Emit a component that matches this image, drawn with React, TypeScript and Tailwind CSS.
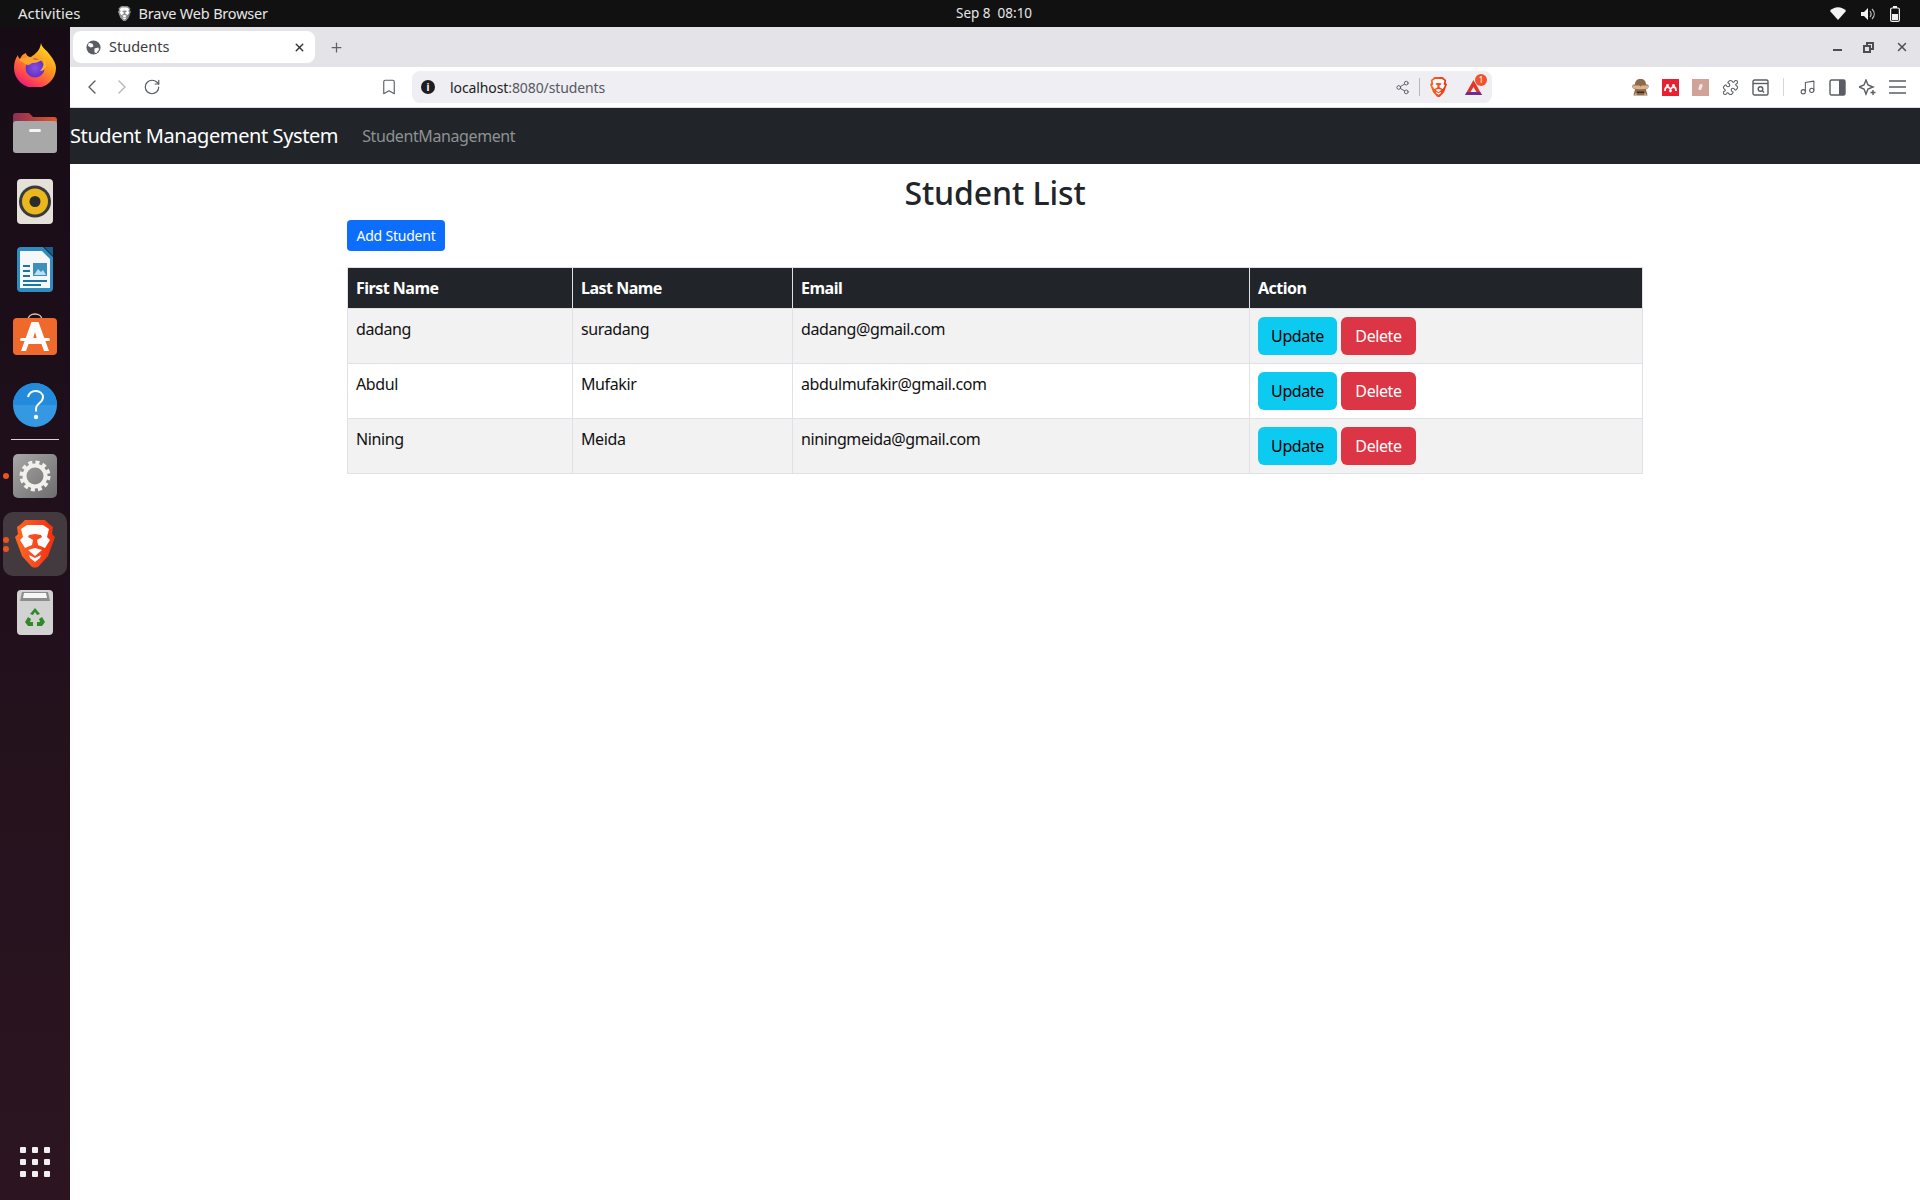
import { Bookmark, ChevronLeft, ChevronRight, Music, Plus, Puzzle, RotateCw, Share2, X } from "lucide-react";
import type { ReactNode } from "react";

const students = [
  { first: "dadang", last: "suradang", email: "dadang@gmail.com" },
  { first: "Abdul", last: "Mufakir", email: "abdulmufakir@gmail.com" },
  { first: "Nining", last: "Meida", email: "niningmeida@gmail.com" },
];

function BraveLion({ size, mono }: { size: number; mono?: boolean }) {
  const id = mono ? "bm" : "bc";
  return (
    <svg width={size} height={size * 1.2} viewBox="0 0 40 48">
      <defs>
        <linearGradient id={id} x1="0" y1="0" x2="1" y2="0">
          <stop offset="0" stopColor={mono ? "#a0a0a0" : "#ff6a1f"} />
          <stop offset="0.5" stopColor={mono ? "#8a8a8a" : "#fb4a1f"} />
          <stop offset="1" stopColor={mono ? "#777" : "#f0300c"} />
        </linearGradient>
      </defs>
      <path d="M10 0h20l4 4 4 3-1 7 3 3-7 19-9 10c-2 2-6 2-8 0L7 36 0 17l3-3-1-7 4-3z" fill={`url(#${id})`} />
      <path d="M12 5h16l6 4-2 8 3 3-5 8-7-3-1-5 5-3-1-2-6-1-6 1-1 2 5 3-1 5-7 3-5-8 3-3-2-8z" fill="#fff" />
      <path d="M13 30l7-2 7 2-7 6z M14 35l6 3 6-3-1 3-5 4-5-4z" fill="#fff" />
    </svg>
  );
}

function Firefox() {
  return (
    <svg width="42" height="44" viewBox="0 0 42 44">
      <defs>
        <linearGradient id="ffa" x1="0.8" y1="0" x2="0.2" y2="1">
          <stop offset="0" stopColor="#ffe226" />
          <stop offset="0.4" stopColor="#ff9a1f" />
          <stop offset="0.75" stopColor="#ff4a4a" />
          <stop offset="1" stopColor="#e5108a" />
        </linearGradient>
        <radialGradient id="ffb" cx="0.5" cy="0.5" r="0.55">
          <stop offset="0" stopColor="#8a4fe0" />
          <stop offset="1" stopColor="#5a2fc6" />
        </radialGradient>
      </defs>
      <path d="M27 0c1 5 5 6 9 12 4 5 6 9 6 13a21 20 0 0 1-42 0c0-5 1-9 4-13 0 2 1 3 2 4 1-3 3-5 6-6 0 2 2 4 5 4 4-3 9-6 10-14z" fill="url(#ffa)" />
      <circle cx="21" cy="25" r="9.500" fill="url(#ffb)" />
      <path d="M5 17c4-3 9-3 14-1 3 1 6 1 10-2-1 4-6 6-11 6-3 3-6 2-8 0-1-1-4-2-5-3z" fill="#ffa42b" />
      <path d="M29 14c2 4 1 10-3 14 3 0 5-2 6-5 0-4-1-7-3-9z" fill="#ffb52b" />
    </svg>
  );
}

function Folder() {
  return (
    <svg width="44" height="40" viewBox="0 0 44 40">
      <defs>
        <linearGradient id="fdt" x1="0" y1="0" x2="1" y2="0">
          <stop offset="0" stopColor="#8b2f56" />
          <stop offset="1" stopColor="#e0562a" />
        </linearGradient>
      </defs>
      <path d="M0 12V3a3 3 0 0 1 3-3h13l4 4h21a3 3 0 0 1 3 3v8z" fill="url(#fdt)" />
      <rect x="0" y="8" width="44" height="32" rx="3" fill="#a8a8a8" />
      <rect x="16" y="16" width="12" height="3" rx="1.500" fill="#f5f5f5" />
    </svg>
  );
}

function Rhythmbox() {
  return (
    <svg width="36" height="45" viewBox="0 0 36 45">
      <rect width="36" height="45" rx="4" fill="#e4e1d8" />
      <circle cx="18" cy="22.500" r="16" fill="#3a3a3c" />
      <circle cx="18" cy="22.500" r="13" fill="#eab71e" />
      <circle cx="18" cy="22.500" r="5.500" fill="#2b2b2b" />
    </svg>
  );
}

function Writer() {
  return (
    <svg width="36" height="45" viewBox="0 0 36 45">
      <path d="M4 0h22l10 10v31a4 4 0 0 1-4 4H4a4 4 0 0 1-4-4V4a4 4 0 0 1 4-4z" fill="#2f8cbf" />
      <path d="M3 4h22l8 8v29H3z" fill="#f4f8fb" />
      <path d="M27 0h9v9z" fill="#18618f" />
      <path d="M6 18h7v2H6zM6 23h7v2H6zM6 28h7v2H6zM6 33h24v2H6zM6 37h18v2H6z" fill="#1a74a8" />
      <rect x="16" y="16" width="14" height="13" fill="#3d8fc0" />
      <path d="M17 28l4-6 3 3 2-2 3 5z" fill="#bfe0f2" />
    </svg>
  );
}

function AppStore() {
  return (
    <svg className="mb-[6px]" width="44" height="42" viewBox="0 0 44 42">
      <path d="M15 7c0-8 14-8 14 0" fill="none" stroke="#e7c9a9" strokeWidth="1.500" />
      <rect y="5" width="44" height="37" rx="4" fill="#f0692c" />
      <path d="M18.500 9h7L36 38h-5l-2.500-7h-13L13 38H8z M20 26h4l-2-7z" fill="#fff" fillRule="evenodd" />
      <rect x="7" y="25" width="30" height="3" rx="1.500" fill="#fff" />
    </svg>
  );
}

function Help() {
  return (
    <svg width="44" height="44" viewBox="0 0 44 44">
      <circle cx="22" cy="22" r="22" fill="#3498e2" />
      <path d="M0 22a22 22 0 0 1 44 0z" fill="#238bdc" />
      <path d="M15 14c1-4 4-6 8-6 4 0 7 3 7 6 0 3-2 5-4 6.500-2 1.500-3 3-3 6v2" fill="none" stroke="#fff" strokeWidth="2" />
      <circle cx="23" cy="34" r="2.200" fill="#fff" />
    </svg>
  );
}

function Settings() {
  return (
    <div className="flex h-[44px] w-[44px] items-center justify-center rounded-[5px] bg-linear-to-br from-[#a8a8a8] to-[#6d6d6d]">
      <svg width="32" height="32" viewBox="0 0 32 32">
        <circle cx="16" cy="16" r="10.500" fill="none" stroke="#f2f0ec" strokeWidth="4" />
        <circle cx="16" cy="16" r="13.500" fill="none" stroke="#f2f0ec" strokeWidth="4" strokeDasharray="4 3.070" />
      </svg>
    </div>
  );
}

function Trash() {
  return (
    <svg width="36" height="45" viewBox="0 0 36 45">
      <rect width="36" height="45" rx="4" fill="#d2d2d2" />
      <path d="M5 2h26l2 9H3z" fill="#8d8d8d" />
      <path d="M7 3h22l1 5H6z" fill="#f6f6f6" />
      <path d="M13 24l5-6 5 6-3 1-2-3-2 3z M11 27l-3 5 3 4h5v-4h-3l1-3z M25 27l3 5-3 4h-5v-4h3l-1-3z" fill="#2f8a26" />
    </svg>
  );
}

function DockSlot({ children, dots = 0, active }: { children: ReactNode; dots?: number; active?: boolean }) {
  return (
    <div className="relative flex h-[68px] w-[70px] items-center justify-center">
      {active && <div className="absolute left-[3px] top-[2px] h-[64px] w-[64px] rounded-[10px] bg-[#433a40]" />}
      <div className="relative flex items-center justify-center">{children}</div>
      {dots > 0 && (
        <div className="absolute left-[3px] top-0 flex h-full flex-col justify-center gap-[3px]">
          {Array.from({ length: dots }).map((_, i) => (
            <span key={i} className="h-[6px] w-[6px] rounded-full bg-[#e95420]" />
          ))}
        </div>
      )}
    </div>
  );
}

function Dock() {
  return (
    <aside className="flex w-[70px] shrink-0 flex-col bg-linear-to-b from-[#170c16] to-[#2c1521] pt-[4px]">
      <DockSlot><Firefox /></DockSlot>
      <DockSlot><Folder /></DockSlot>
      <DockSlot><Rhythmbox /></DockSlot>
      <DockSlot><Writer /></DockSlot>
      <DockSlot><AppStore /></DockSlot>
      <DockSlot><Help /></DockSlot>
      <div className="mx-[11px] h-[1px] bg-[#d8d4d6]" />
      <div className="h-[2px]" />
      <DockSlot dots={1}><Settings /></DockSlot>
      <DockSlot dots={2} active><BraveLion size={40} /></DockSlot>
      <DockSlot><Trash /></DockSlot>
      <div className="mt-auto mb-[23px] grid grid-cols-3 gap-[6px] self-center">
        {Array.from({ length: 9 }).map((_, i) => (
          <span key={i} className="h-[6px] w-[6px] rounded-[1px] bg-[#f0f0f0]" />
        ))}
      </div>
    </aside>
  );
}

function TopBar() {
  return (
    <header className="relative flex h-[27px] shrink-0 items-center bg-[#111111] text-[14.5px] text-[#e6e6e6]">
      <span className="ml-[18px] text-[15px]">Activities</span>
      <span className="ml-[37px] flex items-center gap-[8px] tracking-[-0.2px]">
        <BraveLion size={13} mono />
        Brave Web Browser
      </span>
      <span className="absolute left-[956px] top-[3px] whitespace-pre text-[13.5px]">Sep 8  08:10</span>
      <div className="ml-auto mr-[20px] flex items-center gap-[15px]">
        <svg width="16" height="13" viewBox="0 0 16 13">
          <path d="M0 4c4-5 12-5 16 0L8 13z" fill="#f2f2f2" />
        </svg>
        <svg width="14" height="14" viewBox="0 0 14 14">
          <path d="M0 5h3l4-4v12L3 9H0z" fill="#f2f2f2" />
          <path d="M9 4c1.500 2 1.500 4 0 6M11 2c3 3 3 7 0 10" fill="none" stroke="#bdbdbd" strokeWidth="1.200" />
        </svg>
        <svg width="10" height="16" viewBox="0 0 10 16">
          <rect x="0.600" y="2" width="8.800" height="13.400" rx="1.500" fill="none" stroke="#f2f2f2" strokeWidth="1.200" />
          <rect x="3" y="0" width="4" height="2" fill="#f2f2f2" />
          <rect x="2" y="8" width="6" height="6" fill="#f2f2f2" />
        </svg>
      </div>
    </header>
  );
}

function TabStrip() {
  return (
    <div className="flex h-[40px] shrink-0 items-center bg-[#e3e3e8] pl-[3px]">
      <div className="flex h-[32px] w-[242px] items-center rounded-[8px] bg-white pl-[13px] pr-[9px] text-[14.5px] text-[#3c3c40]">
        <svg width="15" height="15" viewBox="0 0 16 16">
          <circle cx="8" cy="8" r="7.500" fill="#5a5d63" />
          <path d="M3 3l4 1 1 3-3 1-3-2zM9 9l4-1 1 2-3 4-2-1z" fill="#fff" />
        </svg>
        <span className="ml-[8px] mt-[-1px]">Students</span>
        <X className="ml-auto text-[#333]" size={13} strokeWidth={2.5} />
      </div>
      <Plus className="ml-[14px] text-[#5f6368]" size={15} />
      <div className="ml-auto mr-[11px] flex items-center gap-[21px] text-[#4d4d52]">
        <span className="mt-[5px] h-[2px] w-[9px] bg-[#4d4d52]" />
        <svg width="11" height="11" viewBox="0 0 11 11">
          <path d="M3 0h8v8H8v3H0V3h3z M5 2v1h3v3h1V2z M2 5v4h4V5z" fill="#4d4d52" fillRule="evenodd" />
        </svg>
        <X size={14} strokeWidth={2.5} />
      </div>
    </div>
  );
}

function Toolbar() {
  return (
    <div className="flex h-[41px] shrink-0 items-center border-b border-[#dcdce0] bg-white text-[#5a5d63]">
      <ChevronLeft className="ml-[10px]" size={24} strokeWidth={1.4} />
      <ChevronRight className="ml-[6px] text-[#b5b7bb]" size={24} strokeWidth={1.4} />
      <RotateCw className="ml-[9px]" size={18} strokeWidth={1.6} />
      <Bookmark className="ml-[219px]" size={18} strokeWidth={1.5} />
      <div className="ml-[14px] flex h-[32px] w-[1080px] items-center rounded-[8px] bg-[#eeeef3] pl-[9px] pr-[9px]">
        <span className="flex h-[14px] w-[14px] items-center justify-center rounded-full bg-[#1f1f22] text-[10px] font-bold text-white">i</span>
        <span className="ml-[15px] text-[14px] tracking-[-0.1px] text-[#222]">
          localhost<span className="text-[#55585e]">:8080/students</span>
        </span>
        <Share2 className="ml-auto" size={15} strokeWidth={1.5} />
        <span className="ml-[9px] h-[18px] w-[1px] bg-[#b8b8be]" />
        <span className="ml-[10px] flex"><BraveLion size={17} /></span>
        <span className="relative ml-[17px] flex">
          <svg width="19" height="17" viewBox="0 0 19 17">
            <path d="M9.500 1L18 16H1z M9.500 8L6 14h7z" fill="#e2352b" fillRule="evenodd" />
            <path d="M1 16h17l-2-3H3z" fill="#6b2d8f" />
          </svg>
          <span className="absolute left-[11px] top-[-5px] flex h-[12px] w-[12px] items-center justify-center rounded-full bg-[#f0532d] text-[8px] text-white">1</span>
        </span>
      </div>
      <div className="ml-[140px] flex items-center gap-[13px]">
        <svg width="17" height="17" viewBox="0 0 17 17">
          <path d="M8.500 0C5 0 3 2 3 5.500H1.500C0 5.500 0 9 1.500 9.500L3 10c0 2-1 3-1.500 6.500h14C15 13 14 12 14 10l1.500-.5C17 9 17 5.500 15.500 5.500H14C14 2 12 0 8.500 0z" fill="#8b6a4c" />
          <path d="M1 6.500h6.500l1 1.200 1-1.200H16v2.500c-2 1.800-13 1.800-15 0z" fill="#dcb38e" />
          <path d="M5 12.500h7v1.500H5z" fill="#3b2a1d" />
          <path d="M2 16.500l2-3 1 3zM15 16.500l-2-3-1 3z" fill="#dcb38e" />
        </svg>
        <svg width="17" height="17" viewBox="0 0 17 17">
          <rect width="17" height="17" fill="#e8202f" />
          <path d="M3 12c0-2 .5-4 2.500-4S8 10 8.500 10 9.500 8 11.500 8 14 10 14 12" fill="none" stroke="#fff" strokeWidth="1.800" />
          <circle cx="5.500" cy="6.500" r="1.400" fill="#fff" />
          <circle cx="11.500" cy="6.500" r="1.400" fill="#fff" />
          <circle cx="8.500" cy="12" r="1.400" fill="#fff" />
        </svg>
        <span className="flex h-[17px] w-[17px] items-center justify-center bg-[#d1a297]">
          <span className="h-[6px] w-[3px] rotate-[20deg] rounded-[1px] bg-[#eceae8]" />
        </span>
        <Puzzle size={17} strokeWidth={1.5} />
        <svg width="17" height="17" viewBox="0 0 17 17" fill="none" stroke="currentColor" strokeWidth="1.400">
          <rect x="1" y="1" width="15" height="15" rx="1.500" />
          <path d="M1 4.500h15" />
          <circle cx="8.500" cy="10" r="2.300" />
          <path d="M10.500 12l1.500 1.500" />
        </svg>
        <span className="ml-[1px] mr-[2px] h-[18px] w-[1px] bg-[#d6d6d9]" />
        <Music size={17} strokeWidth={1.5} />
        <svg width="17" height="17" viewBox="0 0 17 17">
          <rect x="1" y="1" width="15" height="15" rx="1.500" fill="none" stroke="currentColor" strokeWidth="1.400" />
          <rect x="10" y="1" width="6" height="15" fill="currentColor" />
        </svg>
        <svg width="17" height="17" viewBox="0 0 17 17" fill="none" stroke="currentColor" strokeWidth="1.400">
          <path d="M7 1l2 5 5 2-5 2-2 5-2-5-5-2 5-2z" />
          <path d="M14 11v5M11.500 13.500h5" />
        </svg>
        <svg width="17" height="14" viewBox="0 0 17 14" fill="none" stroke="currentColor" strokeWidth="1.400">
          <path d="M0 1h17M0 7h17M0 13h17" />
        </svg>
      </div>
    </div>
  );
}

function StudentTable() {
  return (
    <table className="w-[1296px] table-fixed border-collapse border border-[#dee2e6] text-[16px] tracking-[-0.4px] text-[#111]">
      <colgroup>
        <col className="w-[225px]" />
        <col className="w-[220px]" />
        <col className="w-[457px]" />
        <col />
      </colgroup>
      <thead>
        <tr className="bg-[#212529] text-left text-white">
          {["First Name", "Last Name", "Email", "Action"].map((h) => (
            <th key={h} className="border border-[#dee2e6] p-2 font-bold tracking-[-0.5px]">{h}</th>
          ))}
        </tr>
      </thead>
      <tbody>
        {students.map((s, i) => (
          <tr key={s.email} className={i % 2 === 0 ? "bg-[#f2f2f2]" : "bg-white"}>
            <td className="border border-[#dee2e6] p-2 align-top">{s.first}</td>
            <td className="border border-[#dee2e6] p-2 align-top">{s.last}</td>
            <td className="border border-[#dee2e6] p-2 align-top">{s.email}</td>
            <td className="border border-[#dee2e6] p-2 align-top">
              <div className="flex gap-[4px]">
                <button className="h-[38px] w-[79px] rounded-[6px] bg-[#0dcaf0] text-black">Update</button>
                <button className="h-[38px] w-[75px] rounded-[6px] bg-[#dc3545] text-white">Delete</button>
              </div>
            </td>
          </tr>
        ))}
      </tbody>
    </table>
  );
}

export default function App() {
  return (
    <div className="flex h-[1200px] w-[1920px] flex-col overflow-hidden bg-white [font-family:'Noto_Sans',sans-serif]">
      <TopBar />
      <div className="flex min-h-0 flex-1">
        <Dock />
        <main className="flex min-w-0 flex-1 flex-col">
          <TabStrip />
          <Toolbar />
          <nav className="flex h-[56px] shrink-0 items-center bg-[#212529]">
            <span className="text-[20px] tracking-[-0.4px] text-white">Student Management System</span>
            <span className="ml-[24px] text-[16px] tracking-[-0.4px] text-[#8f9193]">StudentManagement</span>
          </nav>
          <section className="mx-auto w-[1320px] px-3">
            <h2 className="mt-[10px] text-center text-[32px] font-medium leading-[38px] tracking-[-0.1px] text-[#212529]">Student List</h2>
            <button className="mt-[8px] block h-[31px] w-[98px] rounded-[4px] bg-[#0d6efd] text-[14px] tracking-[-0.2px] text-white">Add Student</button>
            <div className="mt-[16px]">
              <StudentTable />
            </div>
          </section>
        </main>
      </div>
    </div>
  );
}
